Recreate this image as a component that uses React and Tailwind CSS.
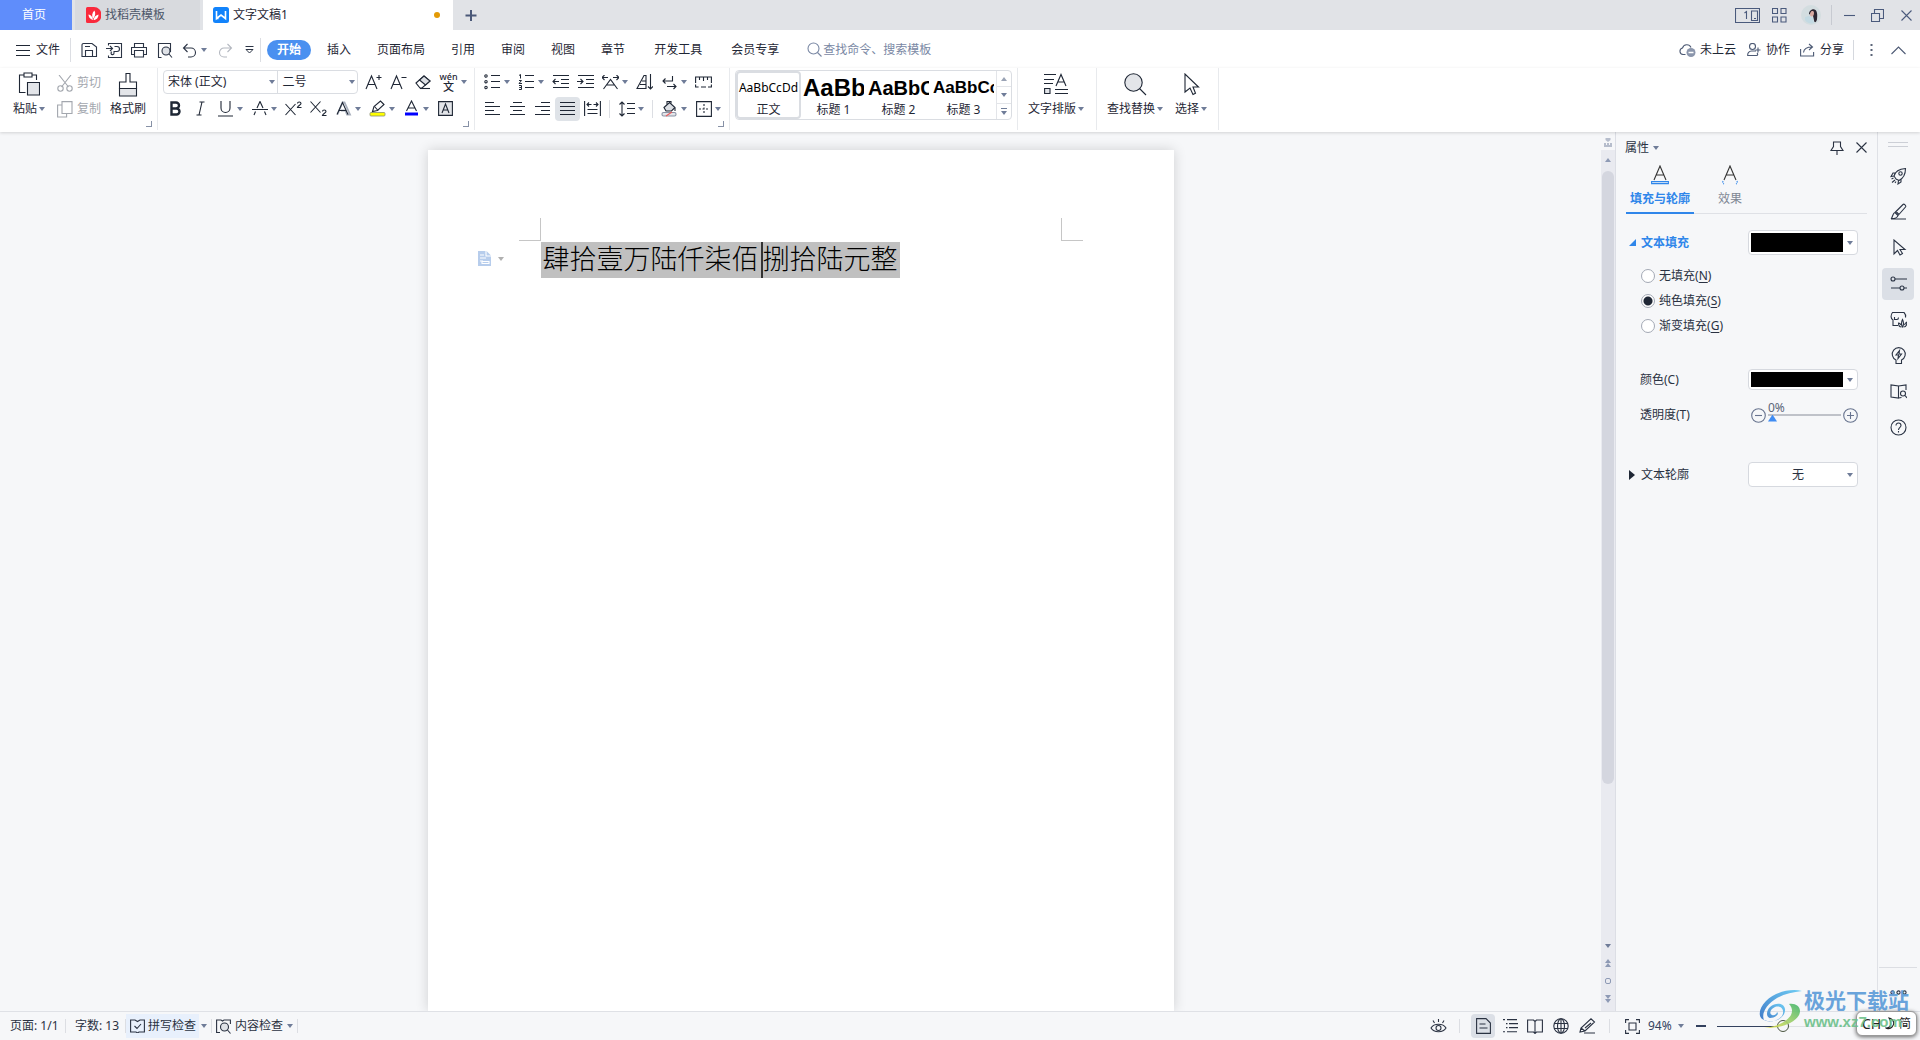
import React from "react";

const Svg = ({ w = 17, h = 17, className = "", children }) => (
  <svg width={w} height={h} viewBox={`0 0 ${w} ${h}`} fill="none" stroke="currentColor" strokeWidth="1.1" className={`shrink-0 ${className}`} aria-hidden="true">
    {children}
  </svg>
);

const Caret = ({ className = "text-[#6f7c98]" }) => (
  <svg width="6" height="4" viewBox="0 0 6 4" className={`shrink-0 ${className}`} aria-hidden="true">
    <path d="M0 0h6L3 4z" fill="currentColor" />
  </svg>
);

const Divider = ({ className = "h-6 bg-[#d8dbe1]" }) => <div className={`w-px shrink-0 ${className}`} />;

/* ---------- title bar ---------- */

const TitleBar = () => (
  <header className="flex h-[30px] shrink-0 items-stretch bg-[#e1e3e7]">
    <button className="w-[72px] bg-[#5f8dfb] pr-1 text-white">首页</button>
    <button className="ml-[3px] flex w-[125px] items-center gap-1 bg-[#d8dade] pl-[11px] text-[#4c5669]">
      <Svg w={15} h={16} className="text-white">
        <path d="M1.500 0H8a7.500 8 0 0 1 0 16H1.500A1.500 1.500 0 0 1 0 14.500V1.500A1.500 1.500 0 0 1 1.500 0z" fill="#fa2a3c" stroke="none" />
        <path d="M7 13C3.500 12 2.500 9.500 2.500 7.500 5 8 6.500 9.500 7 13z" fill="currentColor" stroke="none" />
        <path d="M7 12C5.500 8.500 6 5.500 8.500 3.500 10 6.500 9 9.500 7 12z" fill="currentColor" stroke="none" />
        <path d="M7.500 13c.500-3 2.500-5 5-5.500 0 3-2 5.500-5 5.500z" fill="currentColor" stroke="none" />
      </Svg>
      找稻壳模板
    </button>
    <button className="ml-[3px] flex w-[250px] items-center bg-white pr-[13px] pl-[10px] text-[#1f2735]">
      <Svg w={16} h={16} className="mr-1 text-white">
        <rect width="16" height="16" rx="2.500" fill="#1283fb" stroke="none" />
        <path d="M3.500 4v7.500L8 8l4.500 3.500V4" strokeWidth="1.600" />
        <path d="M3.500 11.500h2" strokeWidth="1.500" />
      </Svg>
      文字文稿1
      <span className="ml-auto h-[6px] w-[6px] rounded-full bg-[#e39a06]" />
    </button>
    <button aria-label="新建" className="flex w-9 items-center justify-center text-[#4a5878]">
      <Svg w={13} h={13}><path d="M6 1v11M.5 6.500h11" strokeWidth="2" /></Svg>
    </button>
    <div className="ml-auto flex items-center pr-2 text-[#4a5a7c]">
      <button aria-label="阅读视图" className="mr-3">
        <Svg w={25} h={15}>
          <path d="M.5.5h24v14H.5zM16.500 3v9.500h6V3z" />
          <path d="M9.500 5l2-1.500V11M19 10.500h2" />
        </Svg>
      </button>
      <button aria-label="应用" className="mr-[14px]">
        <Svg w={15} h={15}><path d="M.5.5h5v5h-5zM9 .5h5v5H9zM.5 9h5v5h-5zM9 9h5v5H9z" /></Svg>
      </button>
      <button aria-label="账户">
        <Svg w={20} h={20}>
          <circle cx="10" cy="10" r="10" fill="#d3dde0" stroke="none" />
          <path d="M8 9c0-3 3-5.500 5.500-4.500 3 1 3 5.500 2.500 10-.500 2-1.500 3-2.500 2.500-1-3-1-5-1.500-6z" fill="#2b2530" stroke="none" />
          <path d="M9.500 7.500c1-2 3.500-2 3.500.5s-1 3.500-2.500 3.500-2-2.500-1-4z" fill="#d8a9a0" stroke="none" />
          <path d="M4 12l4-1 4 2 1 5c-4 1-7 0-9-3z" fill="#c3dae3" stroke="none" />
        </Svg>
      </button>
      <Divider className="mr-3 ml-[10px] h-5 bg-[#c7cad1]" />
      <button aria-label="最小化" className="mr-4"><Svg w={11} h={13}><path d="M0 6.500h11" /></Svg></button>
      <button aria-label="还原" className="mr-[17px]">
        <Svg w={13} h={13}><path d="M.5 4.500h8v8h-8zM3.500 4.500V.5h9v9h-4" /></Svg>
      </button>
      <button aria-label="关闭"><Svg w={11} h={11}><path d="M.5.5l10 10M10.500.5l-10 10" /></Svg></button>
    </div>
  </header>
);

/* ---------- menu row ---------- */

const menus = ["插入", "页面布局", "引用", "审阅", "视图", "章节"];

const MenuRow = () => (
  <nav className="flex h-[38px] shrink-0 items-center bg-white pt-[2px] pl-4 text-[#1f2735]">
    <button className="flex items-center gap-[6px]">
      <Svg w={14} h={11}><path d="M0 .5h14M0 5.500h14M0 10.500h14" /></Svg>
      文件
    </button>
    <Divider className="mx-[10px] h-6 bg-[#dcdee3]" />
    <div className="flex items-center text-[#2b3445]">
      <button aria-label="保存" className="mr-2">
        <Svg w={17} h={16}><path d="M1 14.500V3a1.500 1.500 0 0 1 1.500-1.500H11L15.500 5v9.500H1zM4.500 14V8.500h7V14M4 4.500h5" /></Svg>
      </button>
      <button aria-label="输出为PDF" className="mr-2">
        <Svg w={17} h={17}>
          <path d="M2.500 3.500V1.500h13v14h-13v-2M0 6.500h6.500M4 4l2.500 2.500L4 9" />
          <path d="M8.500 4.500h2.500a2 2 0 0 1 0 5h-3v1.500a1.500 1.500 0 1 1-2-1.300" />
        </Svg>
      </button>
      <button aria-label="打印" className="mr-[10px]">
        <Svg w={16} h={16}><path d="M3.500 5V1.500h9V5M3.500 12.500H.5v-7h15v7h-3M3.500 8.500h9V15h-9z" /></Svg>
      </button>
      <button aria-label="打印预览" className="mr-[9px]">
        <Svg w={16} h={17}>
          <path d="M4.500 15.500H1.500v-14h12v8.500" />
          <circle cx="9" cy="9" r="4" fill="#dfe2e7" />
          <path d="M12 12l3 3.500" />
        </Svg>
      </button>
      <button aria-label="撤销" className="mr-1">
        <Svg w={15} h={15}><path d="M1.500 5h7.500a4.500 4.500 0 0 1 0 9H6M5.500 1l-4 4 4 4" /></Svg>
      </button>
      <button aria-label="撤销选项" className="mr-[11px]"><Caret /></button>
      <button aria-label="恢复" className="mr-3 text-[#b4b8c0]">
        <Svg w={15} h={15}><path d="M13.500 5H6a4.500 4.500 0 0 0 0 9h3M9.500 1l4 4-4 4" /></Svg>
      </button>
      <button aria-label="自定义快速访问"><Svg w={9} h={8}><path d="M.5.5h8M1 3.500h7L4.500 7z" strokeWidth="1" /></Svg></button>
    </div>
    <Divider className="mx-[6px] h-6 bg-[#dcdee3]" />
    <button className="mr-[3px] h-5 rounded-full bg-[#4a90f0] px-[10px] font-bold text-white">开始</button>
    {menus.map((m) => (
      <button key={m} className="shrink-0 px-[13px]">{m}</button>
    ))}
    <button className="shrink-0 px-4">开发工具</button>
    <button className="shrink-0 px-[13px]">会员专享</button>
    <label className="ml-[15px] flex items-center text-[#7a88a4]">
      <Svg w={16} h={16}><circle cx="6.500" cy="6.500" r="5.500" /><path d="M10.500 10.500l4 4" /></Svg>
      <input aria-label="搜索" placeholder="查找命令、搜索模板" className="w-32 outline-none placeholder:text-[#7a88a4]" />
    </label>
    <div className="ml-auto flex items-center pr-[14px]">
      <button className="mr-[11px] flex items-center gap-1">
        <Svg w={17} h={16} className="text-[#4d5a74]">
          <path d="M6.500 12.500H4a3.300 3.300 0 0 1-.5-6.500A4.500 4.500 0 0 1 12 5.500" />
          <circle cx="12" cy="10.500" r="4.500" fill="#8b96ac" stroke="none" />
          <path d="M9.500 10.500h5" stroke="#fff" strokeWidth="1.500" />
        </Svg>
        未上云
      </button>
      <button className="mr-[10px] flex items-center gap-[5px]">
        <Svg w={14} h={14} className="text-[#4d5a74]">
          <circle cx="5.500" cy="3.500" r="3" />
          <path d="M9 8H4.500A4 4 0 0 0 .7 12.500h8.800c1.500 0 1.500-1.500.5-2.500M11 4.500v5M8.500 7h5" />
        </Svg>
        协作
      </button>
      <button className="mr-[9px] flex items-center gap-[5px]">
        <Svg w={15} h={14} className="text-[#4d5a74]">
          <path d="M.6 6v7h13V9M3.500 9.500C4 5.500 7 4 12 4M9 1l3.500 3L9 7" />
        </Svg>
        分享
      </button>
      <Divider className="h-5 bg-[#d5d8de]" />
      <button aria-label="更多" className="mr-[18px] ml-4 text-[#5b6578]">
        <Svg w={3} h={14}><path d="M1.500 1v2M1.500 6v2M1.500 11v2" strokeWidth="2" /></Svg>
      </button>
      <button aria-label="收起功能区" className="text-[#4d5a74]"><Svg w={15} h={9}><path d="M.5 8l7-7 7 7" /></Svg></button>
    </div>
  </nav>
);

/* ---------- ribbon ---------- */

const Tool = ({ label, caret, active, w, h, children }) => (
  <button aria-label={label} className="flex items-center">
    <span className={`flex h-6 w-[25px] items-center justify-center rounded-sm ${active ? "bg-[#dfe3e8]" : ""}`}>
      <Svg w={w} h={h}>{children}</Svg>
    </span>
    {caret && <span className="-ml-px w-[10px]"><Caret /></span>}
  </button>
);

const BigTool = ({ label, caret, icon, className = "" }) => (
  <button className={`flex flex-col items-center ${className}`}>
    <span className="flex h-[30px] items-center">{icon}</span>
    <span className="flex h-5 items-center gap-[2px]">{label}{caret && <Caret />}</span>
  </button>
);

const Group = ({ className = "", corner, children }) => (
  <section className={`relative flex h-[62px] shrink-0 border-r border-[#e8eaed] ${className}`}>
    {children}
    {corner && (
      <button aria-label="更多设置" className="absolute right-[5px] bottom-[3px] h-[6px] w-[6px] border-r border-b border-[#8791a6]" />
    )}
  </section>
);

const Lines = ({ rows }) => <path d={rows.map(([x, y, l]) => `M${x} ${y}.5h${l}`).join("")} />;

const Combo = ({ label, value, className }) => (
  <div className={`flex items-center ${className}`}>
    <select aria-label={label} defaultValue={value} className="h-full w-full appearance-none pl-1 outline-none">
      <option>{value}</option>
    </select>
    <span className="-ml-2 pr-[2px]"><Caret /></span>
  </div>
);

const styleCards = [
  { name: "标题 1", sample: "AaBb", cls: "text-[24px]" },
  { name: "标题 2", sample: "AaBbC", cls: "text-[20px]" },
  { name: "标题 3", sample: "AaBbCc", cls: "text-[17px]" },
];

const Ribbon = () => (
  <div className="z-10 flex h-16 shrink-0 bg-white text-[#1f2735] shadow-[0_1px_3px_rgba(0,0,0,0.15)]">
    <Group corner className="w-[158px] pl-[13px]">
      <BigTool label="粘贴" caret className="w-8 pt-[1px]" icon={
        <Svg w={22} h={24}>
          <path d="M7.500 20.500H1.500V3H6M14 3h4.500v5M6 1h8v4H6z" />
          <path d="M9.500 10.500H21.500v12.500H9.500z" fill="#e3e5e9" />
        </Svg>} />
      <div className="ml-3 flex flex-col pt-[1px] text-[#a3a7ae]">
        <button className="flex h-7 items-center gap-1">
          <Svg w={16} h={17}><path d="M2 0l9.500 12M14 0L4.500 12" /><circle cx="3.500" cy="13.500" r="2.700" /><circle cx="12.500" cy="13.500" r="2.700" /></Svg>
          剪切
        </button>
        <button className="flex h-6 items-center gap-1">
          <Svg w={16} h={17}><path d="M5 .6h10v11.900H5zM4.500 4H.6v12h9v-3.500" /></Svg>
          复制
        </button>
      </div>
      <BigTool label="格式刷" className="ml-[9px] pt-[1px]" icon={
        <Svg w={20} h={25}>
          <path d="M1.500 16.500V10H8V1.500h4V10h6.500v6.500z" />
          <path d="M1.500 16.500h17v7.500h-17z" fill="#e3e5e9" />
        </Svg>} />
    </Group>

    <Group corner className="w-[317px] flex-col pl-[5px]">
      <div className="flex h-7 items-center">
        <div className="flex h-6 w-[195px] rounded-sm border border-[#dadde2]">
          <Combo label="字体" value="宋体 (正文)" className="w-[115px] border-r border-[#dadde2]" />
          <Combo label="字号" value="二号" className="w-[79px]" />
        </div>
        <div className="ml-[3px] flex">
          <Tool label="增大字号" w={17} h={16}><path d="M1 15L6.500 2 12 15M3 10.500h7M11.500 3.500h5M14 1v5" /></Tool>
          <Tool label="减小字号" w={17} h={16}><path d="M1 15L6.500 2 12 15M3 10.500h7M11.500 3.500h5" /></Tool>
          <Tool label="清除格式" w={17} h={16}><path d="M1 9l8-7 6 5-8 7H5z" /><path d="M4.500 6l6 5 4.500-4L9 2z" fill="#dcdfe4" /><path d="M5 14.500h10" /></Tool>
          <button aria-label="拼音指南" className="flex items-center">
            <span className="flex h-6 w-[25px] flex-col items-center justify-center text-[9px] leading-[10px] font-medium">
              <span>wén</span><span className="text-[11px]">文</span>
            </span>
            <Caret />
          </button>
        </div>
      </div>
      <div className="flex h-[25px] items-center">
        <Tool label="加粗" w={13} h={15}><path d="M2.500 1.500v12h5a3 3 0 0 0 0-6h-5 4.500a3 3 0 0 0 0-6z" strokeWidth="2.400" /></Tool>
        <Tool label="倾斜" w={9} h={15}><path d="M3.500 1h5M.5 14h5M6 1L3 14" /></Tool>
        <Tool label="下划线" caret w={15} h={16}><path d="M3 0v7a4.500 4.500 0 0 0 9 0V0M0 15h15" /></Tool>
        <Tool label="删除线" caret w={16} h={15}><path d="M0 8.500h16M5 7l3-6.500L11 7M2 14l1.500-3.500M14 14l-1.500-3.500" /></Tool>
        <Tool label="上标" w={17} h={15}><path d="M.5 3l10 11M10.500 3L.5 14" /><path d="M12.500 2.500c0-2 3.500-2 3.500 0 0 1.500-3 2-3.500 4H16.500" /></Tool>
        <Tool label="下标" w={17} h={15}><path d="M.5.5l10 11M10.500.5l-10 11" /><path d="M12.500 10.500c0-2 3.500-2 3.500 0 0 1.500-3 2-3.500 4H16.500" /></Tool>
        <Tool label="文字效果" caret w={16} h={15}><path d="M1.500 13.500L6.500 1.500h2l5.500 12h-3l-1.500-4H5" stroke="#a9b0bd" strokeWidth="1.800" /><path d="M1 13.500L6.500 1.500 12 13.500M3 9.500h7" /></Tool>
        <Tool label="突出显示" caret w={18} h={17}><rect x="1" y="12.500" width="15" height="3.500" rx="1" fill="#ffff00" stroke="#8a8f70" strokeWidth=".8" /><path d="M3.500 11.500l1.500-5L11.500 1l3.500 3.500-6.500 6z" /><path d="M5.500 6.500l3.500 4" /></Tool>
        <Tool label="字体颜色" caret w={15} h={17}><path d="M2.500 11L7.500 1l5 10M4 8h7" /><path d="M1 14h13" stroke="#0000ff" strokeWidth="3" /></Tool>
        <Tool label="字符底纹" w={15} h={15}><path d="M.6.6h13.800v13.800H.6z" fill="#e3e5e9" /><path d="M4 12l3.500-9L11 12M5 9h5" /></Tool>
      </div>
    </Group>

    <Group corner className="w-[255px] flex-col pl-[5px]">
      <div className="flex h-7 items-center">
        <Tool label="项目符号" caret w={17} h={16}><Lines rows={[[7, 1, 9], [7, 7, 9], [7, 13, 9]]} /><circle cx="2" cy="2" r="1.200" /><circle cx="2" cy="7.700" r="1.200" /><circle cx="2" cy="13.500" r="1.200" /></Tool>
        <Tool label="编号" caret w={17} h={16}><Lines rows={[[7, 1, 9], [7, 7, 9], [7, 13, 9]]} /><path d="M1 1.500l1.500-1v4M1 6.500h2.500L1 9.500h3M1 11.500h2.500v2H1.500h2v2H1" strokeWidth="1" /></Tool>
        <Tool label="减少缩进" w={17} h={14}><Lines rows={[[1, 0, 16], [9, 4, 8], [9, 8, 8], [1, 12, 16]]} /><path d="M7 6.500H1M3.500 4L1 6.500 3.500 9" /></Tool>
        <Tool label="增加缩进" w={17} h={14}><Lines rows={[[1, 0, 16], [9, 4, 8], [9, 8, 8], [1, 12, 16]]} /><path d="M0 6.500h6M3.500 4L6 6.500 3.500 9" /></Tool>
        <Tool label="中文版式" caret w={17} h={15}><path d="M1.500 14L8.500 4.500 15.500 14M4.500 10h8M0 2.500h6M2.500 0L0 2.500 2.500 5M17 2.500h-6M14.500 0L17 2.500 14.500 5" /></Tool>
        <Tool label="排序" w={17} h={16}><path d="M1 14.500L8 1.500h2v13z" /><path d="M4 10.500h6M6 7h4" /><path d="M14.500 0v15M12 12.500l2.500 2.500 2.500-2.500" /></Tool>
        <Tool label="换行符" caret w={15} h={15}><path d="M10.500 1v5H1M3.500 3.500L1 6l2.500 2.500M5 11.500h9M11.500 9l2.500 2.500-2.500 2.500" /></Tool>
        <Tool label="标尺" w={17} h={12}><path d="M.6 7V1h15.800v6M4.500 1v3M8.500 1v4M12.500 1v3M.6 8.500v2.500h3M6 11h5M13 11h3.400V8.500" /></Tool>
      </div>
      <div className="flex h-[25px] items-center">
        <Tool label="左对齐" w={15} h={14}><Lines rows={[[0, 0, 9], [0, 4, 15], [0, 8, 9], [0, 12, 15]]} /></Tool>
        <Tool label="居中" w={15} h={14}><Lines rows={[[3, 0, 9], [0, 4, 15], [3, 8, 9], [0, 12, 15]]} /></Tool>
        <Tool label="右对齐" w={15} h={14}><Lines rows={[[6, 0, 9], [0, 4, 15], [6, 8, 9], [0, 12, 15]]} /></Tool>
        <Tool label="两端对齐" active w={15} h={14}><Lines rows={[[0, 0, 15], [0, 4, 15], [0, 8, 15], [0, 12, 15]]} /></Tool>
        <Tool label="分散对齐" w={17} h={15}><path d="M.6 0v15M16.400 0v15M3.500 8.500h10M3.500 12.500h10M3 3.500h4.500M5 1.500L3 3.500l2 2M14 3.500H9.500M12 1.500l2 2-2 2" /></Tool>
        <Divider className="mx-1 h-[18px] bg-[#dcdee3]" />
        <Tool label="行距" caret w={16} h={16}><Lines rows={[[8, 2, 8], [8, 7, 8], [8, 12, 8]]} /><path d="M3 1v14M.5 3.500L3 1l2.500 2.500M.5 12.500L3 15l2.500-2.500" /></Tool>
        <Divider className="mx-1 h-[18px] bg-[#dcdee3]" />
        <Tool label="底纹颜色" caret w={17} h={17}><path d="M3 7.500L8.500 2.500 14 7.500 10.500 11H5z" fill="#dcdfe4" /><path d="M6 4.500V1.500h4v2M14 8v3" /><rect x="1" y="12.500" width="14" height="3.500" rx="1.500" fill="#e3e5e9" stroke="#8a93a5" /><path d="M5 16l6-4" stroke="#ea5a5a" /></Tool>
        <Tool label="边框" caret w={16} h={16}><path d="M.6.6h14.800v14.800H.6z" /><path d="M8 3v10M3 8h10" strokeDasharray="2 1.500" /></Tool>
      </div>
    </Group>

    <Group className="w-[288px] pt-[2px] pl-[5px]">
      <div className="flex h-[50px] w-[277px] rounded-sm border border-[#dadde2]">
        <button className="flex w-[65px] shrink-0 flex-col items-center rounded-sm border-2 border-[#dadde2]">
          <span className="h-7 pt-[1px] leading-7 text-black">AaBbCcDd</span>
          <span className="leading-[18px]">正文</span>
        </button>
        {styleCards.map((s) => (
          <button key={s.name} className="flex w-[65px] shrink-0 flex-col items-center px-[2px] pt-[2px]">
            <span className={`block h-7 w-full overflow-hidden text-left font-['Liberation_Sans'] leading-[30px] font-bold text-black ${s.cls}`}>{s.sample}</span>
            <span className="leading-[18px]">{s.name}</span>
          </button>
        ))}
        <div className="flex flex-1 flex-col border-l border-[#e3e5e9]">
          <button aria-label="上一行" className="flex h-4 items-center justify-center border-b border-[#e3e5e9]"><Caret className="rotate-180 text-[#9aa3b5]" /></button>
          <button aria-label="下一行" className="flex h-[17px] items-center justify-center border-b border-[#e3e5e9]"><Caret /></button>
          <button aria-label="更多样式" className="flex h-[15px] flex-col items-center justify-center gap-[2px] text-[#6f7c98]">
            <span className="h-px w-[6px] bg-[#6f7c98]" /><Caret />
          </button>
        </div>
      </div>
    </Group>

    <Group className="w-[79px] pl-[10px]">
      <BigTool label="文字排版" caret className="pt-[1px]" icon={
        <Svg w={24} h={22}><Lines rows={[[0, 1, 12], [0, 6, 10], [0, 10, 9], [11, 16, 13], [11, 20, 13]]} /><path d="M12 13L17 1.500 22 13M14 9h6" /><path d="M.6 15.500H6v5H.6z" fill="#e3e5e9" /></Svg>} />
    </Group>
    <Group className="w-[122px] pl-[10px]">
      <BigTool label="查找替换" caret className="pt-[1px]" icon={
        <Svg w={23} h={23}><circle cx="9.500" cy="9.500" r="8.700" fill="#e3e5e9" /><path d="M15.500 15.500l6.500 6.500" /></Svg>} />
      <BigTool label="选择" caret className="ml-3 pt-[1px]" icon={
        <Svg w={17} h={23}><path d="M2 1v18l5-4 3 6.500 2.500-1.200L10 14h5.500z" /></Svg>} />
    </Group>
  </div>
);

/* ---------- document area ---------- */

const Document = () => (
  <main className="flex min-w-0 flex-1 justify-center overflow-hidden pt-[18px]">
    <article className="w-[746px] shrink-0 bg-white pt-[68px] shadow-[0_0_12px_rgba(0,0,0,0.16)]">
      <div className="flex justify-between px-[91px]">
        <span className="h-[23px] w-[22px] border-r border-b border-[#c6c6c6]" />
        <span className="h-[23px] w-[22px] border-b border-l border-[#c6c6c6]" />
      </div>
      <div className="mt-[1px] flex items-start pl-[50px]">
        <button aria-label="段落布局" className="mt-[9px] mr-[37px] flex items-center gap-[7px]">
          <Svg w={13} h={15} className="text-white">
            <path d="M0 0h8.500L13 4.500V15H0z" fill="#b7cdec" stroke="none" />
            <path d="M8 0v5h5M2 4h4M2 7h6M2 10h3M4 10.500h7v2H4z" />
          </Svg>
          <Caret className="text-[#b0b0b0]" />
        </button>
        <p className="flex h-9 bg-[#c0c0c0] px-[2px] text-[27px] leading-[34px] font-light text-black">
          肆拾壹万陆仟柒佰<span className="ml-[2px] h-full w-[2px] bg-[#333]" />捌拾陆元整
        </p>
      </div>
    </article>
  </main>
);

const ScrollBar = () => (
  <div className="flex w-[15px] shrink-0 flex-col items-center border-r border-[#dcdee5] text-[#8e9ab5]">
    <button aria-label="标尺" className="flex h-[18px] items-center pt-[2px] text-[#b6bdcc]">
      <svg width="8" height="9" viewBox="0 0 8 9" fill="currentColor"><path d="M1.500 0h5v2L4 4 1.500 2zM0 5h2v2h1V5h2v2h1V5h2v4H0z" /></svg>
    </button>
    <div className="flex w-full flex-1 flex-col items-center bg-[#e9eaf0]">
      <button aria-label="向上滚动" className="flex h-[21px] items-center pb-[2px]"><Caret className="rotate-180" /></button>
      <div className="w-3 flex-[613] rounded-full bg-[#d4d6df]" />
      <div className="flex-[153]" />
      <div className="flex h-[74px] flex-col items-center justify-between pt-[7px] pb-2">
        <Caret />
        <svg width="6" height="8" viewBox="0 0 6 8" fill="currentColor"><path d="M3 0l3 4H0zM3 4l3 4H0z" /></svg>
        <span className="h-[6px] w-[6px] rounded-[2px] border border-[#8e9ab5]" />
        <svg width="6" height="8" viewBox="0 0 6 8" fill="currentColor"><path d="M0 0h6L3 4zM0 4h6L3 8z" /></svg>
      </div>
    </div>
  </div>
);

/* ---------- properties panel ---------- */

const Swatch = ({ label, className }) => (
  <button aria-label={label} className={`ml-auto flex w-[110px] items-center gap-1 rounded-sm border border-[#d6d9df] bg-white p-[2px] ${className}`}>
    <span className="h-full w-[92px] bg-black" />
    <Caret />
  </button>
);

const fills = [
  { t: "无填充", k: "N" },
  { t: "纯色填充", k: "S", on: true },
  { t: "渐变填充", k: "G" },
];

const Panel = () => (
  <aside className="flex w-[261px] shrink-0 flex-col pl-[10px] text-[#2a3242]">
    <div className="flex h-[31px] items-center pr-[10px]">
      <button className="-ml-px flex items-center gap-1">属性 <Caret /></button>
      <button aria-label="固定" className="ml-auto"><Svg w={14} h={14}><path d="M3.500 1h7v4.500L13 9.500H1L3.500 5.500zM7 9.500V14" /></Svg></button>
      <button aria-label="关闭面板" className="ml-3"><Svg w={11} h={11}><path d="M.5.5l10 10M10.500.5l-10 10" /></Svg></button>
    </div>
    <div role="tablist" className="mr-[10px] flex h-[51px] border-b border-[#dfe1e6]">
      <button role="tab" aria-selected="true" className="-mb-px flex w-[68px] flex-col items-center border-b-2 border-[#2f86ea] font-bold text-[#2f86ea]">
        <Svg w={18} h={20} className="mt-[2px] text-[#333]"><path d="M3 15L9 1l6 14M5 10h8" /><path d="M.6 16.600h16.800v2H.6z" stroke="#2f86ea" /></Svg>
        <span className="mt-[5px] leading-[18px]">填充与轮廓</span>
      </button>
      <button role="tab" className="ml-6 flex w-6 flex-col items-center text-[#7f8794]">
        <Svg w={18} h={20} className="mt-[2px] text-[#333]"><path d="M3 15L9 1l6 14M5 10h8" /><path d="M2 16c-.500 1.500 0 2.500 1 3M16 16c.500 1.500 0 2.500-1 3" stroke="#2f86ea" strokeDasharray="1.500 1" /></Svg>
        <span className="mt-[5px] leading-[18px] whitespace-nowrap">效果</span>
      </button>
    </div>
    <div className="mt-4 flex items-center pr-[19px] pl-[3px]">
      <button className="flex items-center gap-[5px] font-bold text-[#2f86ea]">
        <svg width="7" height="7" viewBox="0 0 7 7"><path d="M7 0v7H0z" fill="currentColor" /></svg>
        文本填充
      </button>
      <Swatch label="文本填充颜色" className="h-[25px]" />
    </div>
    <fieldset className="mt-2 flex flex-col pl-[15px]">
      {fills.map((f) => (
        <label key={f.k} className="flex h-[25px] items-center gap-1">
          <input type="radio" name="fill" defaultChecked={f.on}
            className="h-[14px] w-[14px] appearance-none rounded-full border border-[#a3a9b5] bg-white checked:bg-[radial-gradient(circle,#1f2735_4px,#fff_5px)]" />
          <span>{f.t}(<u className="underline-offset-2">{f.k}</u>)</span>
        </label>
      ))}
    </fieldset>
    <div className="mt-[31px] flex items-center pr-[19px] pl-[14px]">
      颜色(C)
      <Swatch label="颜色" className="h-[21px]" />
    </div>
    <div className="mt-[15px] flex h-5 items-center pr-[19px] pl-[14px]">
      <label htmlFor="alpha">透明度(T)</label>
      <button aria-label="减少" className="ml-auto text-[#68748f]"><Svg w={15} h={15}><circle cx="7.500" cy="7.500" r="6.800" /><path d="M4 7.500h7" /></Svg></button>
      <div className="relative mx-[2px] flex w-[73px] items-center">
        <span className="absolute -top-[5px] left-0 leading-none text-[#5b6578]">0%</span>
        <input id="alpha" type="range" defaultValue="0"
          className="h-4 w-full appearance-none bg-[linear-gradient(#bfc2c9,#bfc2c9)] bg-[size:100%_2px] bg-center bg-no-repeat [&::-webkit-slider-thumb]:mt-[6px] [&::-webkit-slider-thumb]:h-[7px] [&::-webkit-slider-thumb]:w-[9px] [&::-webkit-slider-thumb]:appearance-none [&::-webkit-slider-thumb]:bg-[#3f8cf3] [&::-webkit-slider-thumb]:[clip-path:polygon(50%_0,100%_100%,0_100%)]" />
      </div>
      <button aria-label="增加" className="text-[#68748f]"><Svg w={15} h={15}><circle cx="7.500" cy="7.500" r="6.800" /><path d="M4 7.500h7M7.500 4v7" /></Svg></button>
    </div>
    <div className="mt-[37px] flex items-center pr-[19px] pl-[3px]">
      <button className="flex items-center gap-[6px]">
        <svg width="6" height="10" viewBox="0 0 6 10"><path d="M0 0l6 5-6 5z" fill="#1f2735" /></svg>
        文本轮廓
      </button>
      <div className="ml-auto flex h-[25px] w-[110px] items-center rounded-sm border border-[#d6d9df] bg-white">
        <select aria-label="文本轮廓" className="h-full flex-1 appearance-none text-center outline-none"><option>无</option></select>
        <span className="pr-1"><Caret /></span>
      </div>
    </div>
  </aside>
);

/* ---------- side rail ---------- */

const rail = [
  { n: "快捷", d: <><path d="M6 12L4 9c1-4 5-7 11.500-7.500C15.500 8 13 11.500 9 13.500zM6 6H3L1 9.500l3-.5M11 12v3l-3 2 .5-3.500M1.500 12l2-1M2 15.500l3-2.500M5 16l1-1.500" /><circle cx="10.500" cy="6.500" r="1.700" /></> },
  { n: "样式", d: <path d="M1 16h15M5 9.500L13 1.500c1-1 3.500 1 2.500 2.500L8 12.500zM5 9.500c-2 .5-2 3-3.500 6 3 0 6-.5 6.500-3zM6 8.500l3 3" /> },
  { n: "选择", d: <path d="M4 1v14l3.500-3.500L10 16l2.500-1.500L10 10.500h5z" /> },
  { n: "属性", on: true, d: <><circle cx="3" cy="4" r="2" /><path d="M5 4h12M1 13h9M14 13h3" /><circle cx="12" cy="13" r="2" /></> },
  { n: "素材", d: <><path d="M8 14.500H3V9C.5 7.500.5 4 2.500 1.500h11.500c1.500 1.500 2 3 1.500 5M4.500 6v2.500H7c1 0 1.500-1 1.500-2" /><path d="M12.500 16c-1.500-2.500-1.500-4.500 0-7.500 1.500 3 1.500 5 0 7.500zM11.500 16c-2 0-3-1.500-3-4 1.500 0 2 1 2.500 2M13.500 16c2.500 0 3.500-1.500 3.500-5-1.500.5-2 1.500-2.500 3" /></> },
  { n: "灵感", d: <path d="M6 14.500v-1.500a6.500 6.500 0 1 1 5.500 0v1.500M6 14.500V16.500h5.500v-2M9.500 3.500L6 8h2.500L8 11.500 11.500 7H9z" /> },
  { n: "查阅", d: <><path d="M8.500 3v12L1 14V2zM8.500 3L16 2v5M8.500 15l3-.5" /><circle cx="13" cy="10.500" r="2.500" /><path d="M15 12.500l2 2.500" /></> },
  { n: "帮助", d: <><circle cx="8.500" cy="8.500" r="7.500" /><path d="M6 6.500c0-3.500 5-3 5 0 0 1.800-2.500 2-2.500 4.500M8.500 12v1.500" /></> },
];

const Rail = () => (
  <aside className="flex w-[43px] shrink-0 flex-col items-center border-l border-[#dfe1e6] pr-[2px] text-[#2b3445]">
    <div className="mt-[10px] mb-[13px] h-[5px] w-5 border-y border-[#cccfd6]" />
    {rail.map((r) => (
      <button key={r.n} aria-label={r.n} className={`mb-1 flex h-8 w-8 items-center justify-center rounded-sm ${r.on ? "bg-[#dbdfe6]" : ""}`}>
        <Svg w={17} h={18}>{r.d}</Svg>
      </button>
    ))}
    <div className="mt-auto h-px w-[38px] bg-[#dcdee3]" />
    <button aria-label="更多工具" className="mt-[22px] mb-4 flex">
      <Svg w={17} h={5}><circle cx="2.500" cy="2.500" r="1.600" /><circle cx="8.500" cy="2.500" r="1.600" /><circle cx="14.500" cy="2.500" r="1.600" /></Svg>
    </button>
  </aside>
);

/* ---------- status bar ---------- */

const StatusBar = () => (
  <footer className="flex h-[29px] shrink-0 items-center border-t border-[#dfe1e6] text-[#2a3242]">
    <span className="w-[65px] pl-[10px]">页面: 1/1</span>
    <Divider className="h-[14px] bg-[#dcdee3]" />
    <span className="w-[59px] pl-[9px]">字数: 13</span>
    <Divider className="h-[14px] bg-[#dcdee3]" />
    <button className="flex h-6 w-[73px] items-center gap-[3px] bg-[#e8f0fc] pl-1">
      <Svg w={15} h={14}><path d="M5 1H.6v12H6l1.500 1L9 13h5.400V1H10L7.500 2.500zM4.500 7l2.500 2.500L11 5" /></Svg>
      拼写检查
    </button>
    <button aria-label="拼写检查选项" className="w-3 pl-[2px]"><Caret /></button>
    <Divider className="h-[14px] bg-[#dcdee3]" />
    <button className="flex items-center gap-[3px] pl-1">
      <Svg w={16} h={15}><path d="M4 13.500H.6V1H5l1.500 1L8 1h6.400v4" /><circle cx="8.500" cy="8" r="4" fill="#dfe2e7" /><path d="M11.500 11l3 3.500" /></Svg>
      内容检查
      <span className="pl-[1px]"><Caret /></span>
    </button>
    <Divider className="ml-1 h-[14px] bg-[#dcdee3]" />

    <div className="ml-auto flex items-center">
      <button aria-label="护眼模式"><Svg w={17} h={16}><path d="M1 10c3-5 12-5 15 0-3 5-12 5-15 0zM8.500 1v3M3 2.500L4.500 5M14 2.500L12.500 5" /><circle cx="8.500" cy="10" r="2.500" /></Svg></button>
      <Divider className="mr-[11px] ml-3 h-[14px] bg-[#dcdee3]" />
      <button aria-label="页面视图" className="flex h-6 w-6 items-center justify-center rounded-sm bg-[#dbdfe6]"><Svg w={15} h={16}><path d="M.6.6H10L14.400 5v10.400H.6zM3.500 6h6M3.500 10h8" /></Svg></button>
      <button aria-label="大纲" className="ml-2"><Svg w={15} h={14}><path d="M0 .6h2M4 .6h10M3 4.600h1.500M6 4.600h9M3 8.600h1.500M6 8.600h9M0 12.800h2M4 12.800h10" /></Svg></button>
      <button aria-label="阅读版式" className="ml-[9px]"><Svg w={16} h={15}><path d="M8 2.500L6.500 1H.6v12h6L8 14.500 9.500 13h5.900V1H9.500L8 2.500v11" /></Svg></button>
      <button aria-label="Web版式" className="ml-[10px]"><Svg w={16} h={16}><circle cx="8" cy="8" r="7.200" /><ellipse cx="8" cy="8" rx="3.500" ry="7.200" /><path d="M1 5.500h14M1 10.500h14M8 1v14" /></Svg></button>
      <button aria-label="写作模式" className="ml-[10px]"><Svg w={17} h={16}><path d="M5 15h11M1 14l1-4L12 .8l3.500 3.200L6 13zM2 10l4 3M12 5l-6 5" /></Svg></button>
      <Divider className="mr-[15px] ml-[13px] h-[14px] bg-[#dcdee3]" />
      <button aria-label="适应页面"><Svg w={15} h={15}><path d="M.6 4V.6H4M11 .6h3.400V4M14.400 11v3.400H11M4 14.400H.6V11M4 4h7v7H4z" /></Svg></button>
      <button className="ml-2 flex w-9 items-center justify-between text-[#33415e]">94% <Caret /></button>
      <button aria-label="缩小" className="ml-3 h-[2px] w-[10px] bg-[#33415e]" />
      <input type="range" aria-label="缩放" min="0" max="100" defaultValue="50"
        className="mr-[71px] ml-[11px] h-4 w-[132px] appearance-none bg-[linear-gradient(90deg,#33415e_50%,#dfe1e6_50%)] bg-[size:100%_1px] bg-center bg-no-repeat [&::-webkit-slider-thumb]:h-3 [&::-webkit-slider-thumb]:w-3 [&::-webkit-slider-thumb]:appearance-none [&::-webkit-slider-thumb]:rounded-full [&::-webkit-slider-thumb]:border [&::-webkit-slider-thumb]:border-[#4a5540] [&::-webkit-slider-thumb]:bg-[#f6f7f9]" />
    </div>
  </footer>
);

const Overlays = () => (
  <>
    <div className="absolute right-[3px] bottom-[4px] z-20 flex h-[25px] w-[61px] items-center justify-center gap-1 rounded-md border border-[#9a9a9a] bg-white text-[14px] text-[#222] shadow-[0_1px_4px_rgba(0,0,0,0.6)]">
      <span>CH</span>
      <Svg w={10} h={14}><path d="M4 1c5 1 6 6 3 9-2 2-5 2-6 1 5 0 6-5 3-10z" /></Svg>
      <span className="text-[12px]">简</span>
    </div>
    <div className="pointer-events-none absolute right-[11px] bottom-[8px] z-30 flex items-center gap-[2px] opacity-90">
      <svg width="43" height="42" viewBox="0 0 43 42">
        <defs>
          <linearGradient id="wmBlue" x1="0" y1="1" x2="1" y2="0"><stop offset="0" stopColor="#2f6fc4" /><stop offset="1" stopColor="#5fc8f4" /></linearGradient>
          <linearGradient id="wmGreen" x1="0" y1="1" x2="1" y2="0"><stop offset="0" stopColor="#e8e04a" /><stop offset=".5" stopColor="#9fd06a" /><stop offset="1" stopColor="#3fb56c" /></linearGradient>
        </defs>
        <path d="M43 2C32-1 16 3 7 12-1 20-1 29 5 31 2 24 8 15 18 9c7-4 16-6 25-7z" fill="url(#wmBlue)" />
        <path d="M5 31c5 3 14 1 18-4 3-5 0-11-7-9-5 2-6 7-3 8 2 1 5-1 5-3 3 2-2 6-7 6-4-1-4-7 0-11 6-5 14-4 15 2 1 8-10 15-21 11z" fill="url(#wmBlue)" />
        <path d="M30 15c6-1 11 2 11 7 0 10-18 18-36 17 12-1 23-6 27-13 2-4 1-8-2-11z" fill="url(#wmGreen)" />
      </svg>
      <div className="flex flex-col">
        <span className="text-[21px] leading-6 font-bold text-[#5a9bd8]">极光下载站</span>
        <span className="font-['Liberation_Sans'] text-[15px] leading-5 font-bold text-[#6cc08a]">www.xz7.com</span>
      </div>
    </div>
  </>
);

export default function App() {
  return (
    <div className="relative flex h-screen flex-col overflow-hidden bg-[#f6f7f9] font-['Noto_Sans','Noto_Sans_CJK_SC',sans-serif] text-[12px] leading-4 whitespace-nowrap">
      <TitleBar />
      <MenuRow />
      <Ribbon />
      <div className="flex min-h-0 flex-1">
        <Document />
        <ScrollBar />
        <Panel />
        <Rail />
      </div>
      <StatusBar />
      <Overlays />
    </div>
  );
}
